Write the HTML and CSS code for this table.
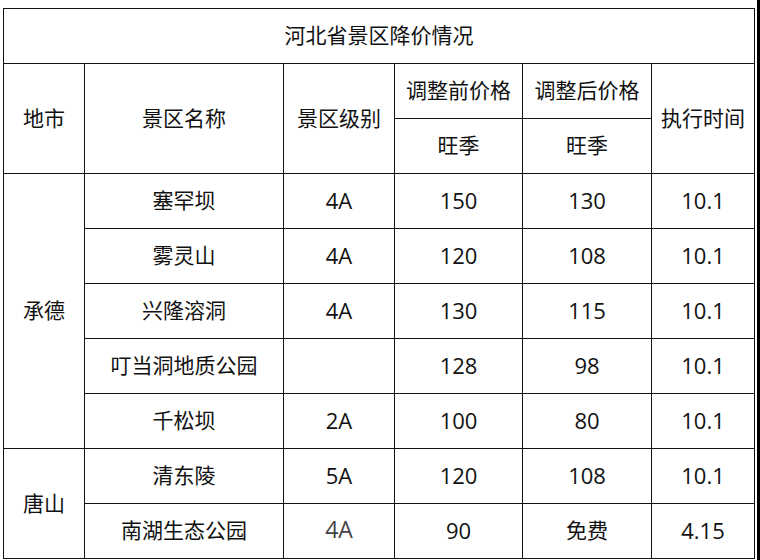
FILE: index.html
```html
<!DOCTYPE html>
<html lang="zh">
<head>
<meta charset="utf-8">
<link rel="stylesheet" href="styles.css">
</head>
<body>
<table class="price-table">
  <colgroup>
    <col class="c-city"><col class="c-name"><col class="c-level"><col class="c-before"><col class="c-after"><col class="c-time">
  </colgroup>
  <tr class="row"><td colspan="6" class="title">河北省景区降价情况</td></tr>
  <tr class="row">
    <td rowspan="2">地市</td>
    <td rowspan="2">景区名称</td>
    <td rowspan="2">景区级别</td>
    <td>调整前价格</td>
    <td>调整后价格</td>
    <td rowspan="2">执行时间</td>
  </tr>
  <tr class="row"><td>旺季</td><td>旺季</td></tr>
  <tr class="row"><td rowspan="5">承德</td><td>塞罕坝</td><td class="num">4A</td><td class="num">150</td><td class="num">130</td><td class="num">10.1</td></tr>
  <tr class="row"><td>雾灵山</td><td class="num">4A</td><td class="num">120</td><td class="num">108</td><td class="num">10.1</td></tr>
  <tr class="row"><td>兴隆溶洞</td><td class="num">4A</td><td class="num">130</td><td class="num">115</td><td class="num">10.1</td></tr>
  <tr class="row"><td>叮当洞地质公园</td><td></td><td class="num">128</td><td class="num">98</td><td class="num">10.1</td></tr>
  <tr class="row"><td>千松坝</td><td class="num">2A</td><td class="num">100</td><td class="num">80</td><td class="num">10.1</td></tr>
  <tr class="row"><td rowspan="2">唐山</td><td>清东陵</td><td class="num">5A</td><td class="num">120</td><td class="num">108</td><td class="num">10.1</td></tr>
  <tr class="row"><td>南湖生态公园</td><td class="num light">4A</td><td class="num">90</td><td>免费</td><td class="num">4.15</td></tr>
</table>
</body>
</html>
```
FILE: styles.css
```css
html, body {
  margin: 0;
  padding: 0;
  background: #fff;
}
body {
  width: 760px;
  height: 560px;
  box-sizing: border-box;
  border-right: 3px solid #000;
  padding: 8px 0 0 3px;
  overflow: hidden;
  font-family: "Noto Sans CJK SC", "Noto Sans", sans-serif;
  color: #111;
}
.price-table {
  border-collapse: collapse;
  table-layout: fixed;
  width: 751px;
}
.c-city { width: 81px; }
.c-name { width: 199px; }
.c-level { width: 111px; }
.c-before { width: 128px; }
.c-after { width: 129px; }
.c-time { width: 103px; }
.price-table td {
  border: 1px solid #111;
  text-align: center;
  vertical-align: middle;
  padding: 0 0 3px;
  font-size: 21px;
  line-height: 1;
}
.row { height: 55px; }
.price-table td.num {
  font-family: "Open Sans", "Noto Sans", sans-serif;
  font-size: 22px;
}
.price-table td.light {
  color: #444;
  font-size: 23px;
}
```
